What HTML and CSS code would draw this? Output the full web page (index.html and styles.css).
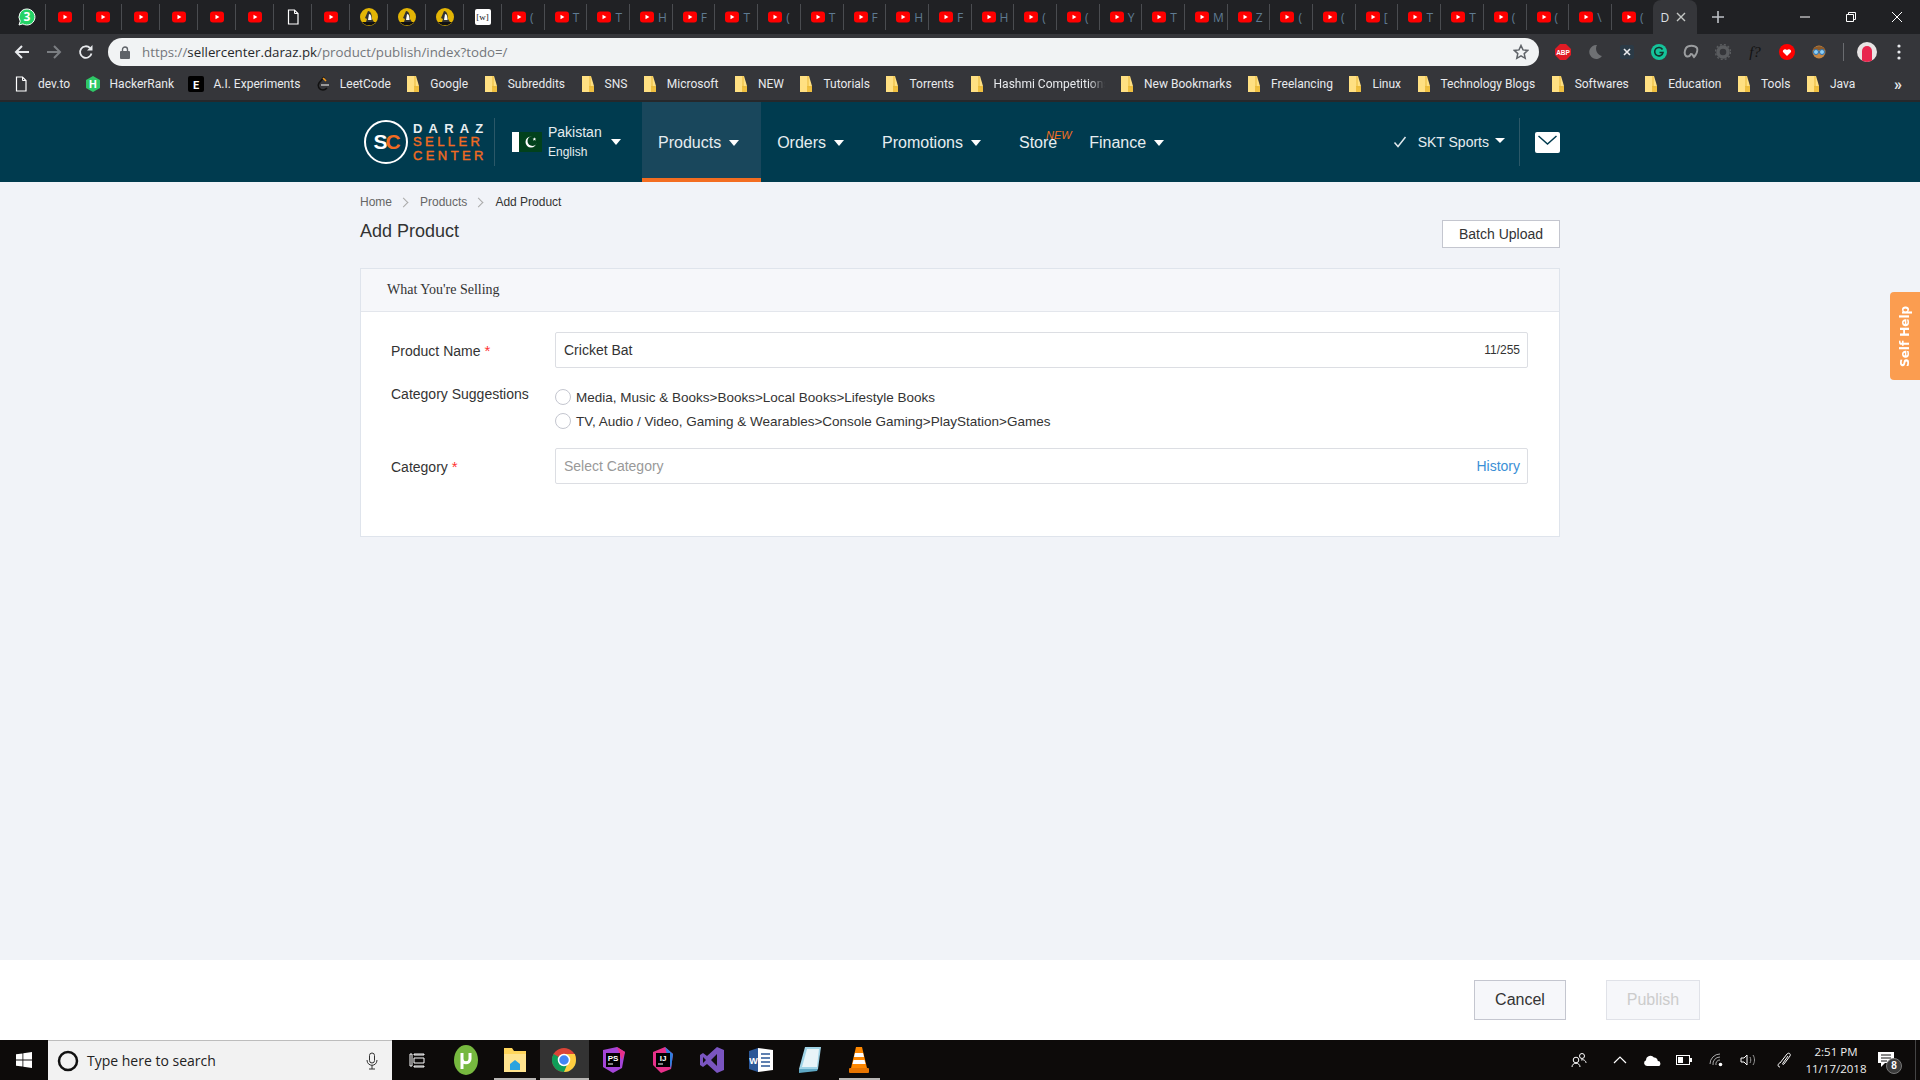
FILE: index.html
```html
<!DOCTYPE html>
<html lang="en">
<head>
  <meta charset="UTF-8">
  <title>Add Product - Daraz Seller Center</title>
  <link rel="stylesheet" href="styles.css">
</head>
<body>
  <svg class="sprites" width="0" height="0">
    <symbol id="yt" viewBox="0 0 14 14"><rect y="1.5" width="14" height="11" rx="3" fill="#f00"/><path d="M5.5 4.8v4.4L9.4 7z" fill="#fff"/></symbol>
    <symbol id="folder" viewBox="0 0 16 16"><path d="M2 0h9l3 10v6H2z" fill="#ffe082"/><path d="M14 10v6H9v-6z" fill="#f0c040"/><path d="M10 0v11h4" fill="none" stroke="#e9b93a"/></symbol>
    <symbol id="doc" viewBox="0 0 16 16"><path d="M3.5 1h6l3.5 3.5v10.500h-9.500z" fill="none" stroke="#fff" stroke-width="1.200"/><path d="M9.500 1v3.500h3.500" fill="none" stroke="#fff"/></symbol>
    <symbol id="tux" viewBox="0 0 18 18"><circle cx="9" cy="9" r="9" fill="#e3b505"/><path d="M2 14a9 9 0 0 0 14 0z" fill="#111"/><path d="M8 3c3 0 4 4 4 8l2 3H6l1-3-2-1z" fill="#333"/><path d="M9 6c2 0 2.500 3 2.500 6H8z" fill="#fff"/></symbol>
  </svg>

  <div class="tabs">
    <div class="tab pinned"><svg width="18" height="18" viewBox="0 0 18 18"><path d="M9 1a8 8 0 0 0-6.800 12.200L1 17l3.900-1.100A8 8 0 1 0 9 1z" fill="#25d366" stroke="#fff" stroke-width="1"/><text x="9" y="13" class="wa-num">3</text></svg></div>
    <div class="tab pinned"><svg width="14" height="14"><use href="#yt"/></svg></div>
    <div class="tab pinned"><svg width="14" height="14"><use href="#yt"/></svg></div>
    <div class="tab pinned"><svg width="14" height="14"><use href="#yt"/></svg></div>
    <div class="tab pinned"><svg width="14" height="14"><use href="#yt"/></svg></div>
    <div class="tab pinned"><svg width="14" height="14"><use href="#yt"/></svg></div>
    <div class="tab pinned"><svg width="14" height="14"><use href="#yt"/></svg></div>
    <div class="tab pinned"><svg width="16" height="16"><use href="#doc"/></svg></div>
    <div class="tab pinned"><svg width="14" height="14"><use href="#yt"/></svg></div>
    <div class="tab pinned"><svg width="18" height="18"><use href="#tux"/></svg></div>
    <div class="tab pinned"><svg width="18" height="18"><use href="#tux"/></svg></div>
    <div class="tab pinned"><svg width="18" height="18"><use href="#tux"/></svg></div>
    <div class="tab pinned"><span class="wiki">[w]</span></div>
    <div class="tab"><svg width="14" height="14"><use href="#yt"/></svg><span>(</span></div>
    <div class="tab"><svg width="14" height="14"><use href="#yt"/></svg><span>T</span></div>
    <div class="tab"><svg width="14" height="14"><use href="#yt"/></svg><span>T</span></div>
    <div class="tab"><svg width="14" height="14"><use href="#yt"/></svg><span>H</span></div>
    <div class="tab"><svg width="14" height="14"><use href="#yt"/></svg><span>F</span></div>
    <div class="tab"><svg width="14" height="14"><use href="#yt"/></svg><span>T</span></div>
    <div class="tab"><svg width="14" height="14"><use href="#yt"/></svg><span>(</span></div>
    <div class="tab"><svg width="14" height="14"><use href="#yt"/></svg><span>T</span></div>
    <div class="tab"><svg width="14" height="14"><use href="#yt"/></svg><span>F</span></div>
    <div class="tab"><svg width="14" height="14"><use href="#yt"/></svg><span>H</span></div>
    <div class="tab"><svg width="14" height="14"><use href="#yt"/></svg><span>F</span></div>
    <div class="tab"><svg width="14" height="14"><use href="#yt"/></svg><span>H</span></div>
    <div class="tab"><svg width="14" height="14"><use href="#yt"/></svg><span>(</span></div>
    <div class="tab"><svg width="14" height="14"><use href="#yt"/></svg><span>(</span></div>
    <div class="tab"><svg width="14" height="14"><use href="#yt"/></svg><span>Y</span></div>
    <div class="tab"><svg width="14" height="14"><use href="#yt"/></svg><span>T</span></div>
    <div class="tab"><svg width="14" height="14"><use href="#yt"/></svg><span>M</span></div>
    <div class="tab"><svg width="14" height="14"><use href="#yt"/></svg><span>Z</span></div>
    <div class="tab"><svg width="14" height="14"><use href="#yt"/></svg><span>(</span></div>
    <div class="tab"><svg width="14" height="14"><use href="#yt"/></svg><span>(</span></div>
    <div class="tab"><svg width="14" height="14"><use href="#yt"/></svg><span>[</span></div>
    <div class="tab"><svg width="14" height="14"><use href="#yt"/></svg><span>T</span></div>
    <div class="tab"><svg width="14" height="14"><use href="#yt"/></svg><span>T</span></div>
    <div class="tab"><svg width="14" height="14"><use href="#yt"/></svg><span>(</span></div>
    <div class="tab"><svg width="14" height="14"><use href="#yt"/></svg><span>(</span></div>
    <div class="tab"><svg width="14" height="14"><use href="#yt"/></svg><span>\</span></div>
    <div class="tab last"><svg width="14" height="14"><use href="#yt"/></svg><span>(</span></div>
    <div class="tab-active"><span>D</span><svg width="10" height="10" viewBox="0 0 10 10"><path d="M1 1l8 8M9 1l-8 8" stroke="#c4c7c5" stroke-width="1.400"/></svg></div>
    <svg class="new-tab" width="14" height="14" viewBox="0 0 14 14"><path d="M7 1v12M1 7h12" stroke="#bdc1c6" stroke-width="1.600"/></svg>
    <div class="win-btns">
      <svg width="12" height="12" viewBox="0 0 12 12"><path d="M1 6h10" stroke="#fff"/></svg>
      <svg width="12" height="12" viewBox="0 0 12 12"><path d="M1.500 3.500h7v7h-7zM3.500 3.500v-2h7v7h-2" fill="none" stroke="#fff"/></svg>
      <svg width="12" height="12" viewBox="0 0 12 12"><path d="M1 1l10 10M11 1L1 11" stroke="#fff"/></svg>
    </div>
  </div>

  <div class="toolbar">
    <div class="tool-btn"><svg width="16" height="16" viewBox="0 0 16 16"><path d="M15 8H2M8 2L2 8l6 6" fill="none" stroke="#e8eaed" stroke-width="2"/></svg></div>
    <div class="tool-btn"><svg width="16" height="16" viewBox="0 0 16 16"><path d="M1 8h13M8 2l6 6-6 6" fill="none" stroke="#7b7e82" stroke-width="2"/></svg></div>
    <div class="tool-btn"><svg width="16" height="16" viewBox="0 0 16 16"><path d="M13.500 9.500A5.800 5.800 0 1 1 12 4" fill="none" stroke="#e8eaed" stroke-width="1.800"/><path d="M14.500 1v5.500H9z" fill="#e8eaed"/></svg></div>
    <div class="url-bar">
      <svg class="lock" width="10" height="13" viewBox="0 0 10 13"><rect y="5" width="10" height="8" rx="1" fill="#5f6368"/><path d="M2.500 5V3.500a2.500 2.500 0 0 1 5 0V5" fill="none" stroke="#5f6368" stroke-width="1.400"/></svg>
      <span class="url"><span class="dim">https://</span>sellercenter.daraz.pk<span class="dim">/product/publish/index?todo=/</span></span>
      <svg class="star" width="16" height="16" viewBox="0 0 16 16"><path d="M8 1.500l2 4.400 4.700.5-3.500 3.200 1 4.700L8 11.900l-4.200 2.400 1-4.700L1.300 6.400 6 5.900z" fill="none" stroke="#5f6368" stroke-width="1.500"/></svg>
    </div>
    <div class="exts">
      <div class="ext"><svg width="16" height="16" viewBox="0 0 16 16"><path d="M5 0h6l5 5v6l-5 5H5l-5-5V5z" fill="#e01b24"/><text x="8" y="10.500" class="abp">ABP</text></svg></div>
      <div class="ext"><svg width="16" height="16" viewBox="0 0 16 16"><path d="M10 1a7 7 0 1 0 5 11A7.500 7.500 0 0 1 10 1z" fill="#6e7073"/></svg></div>
      <div class="ext"><svg width="14" height="14" viewBox="0 0 14 14"><rect width="14" height="14" rx="2" fill="#2b3a46"/><path d="M4 4l6 6M10 4l-6 6" stroke="#e8eaed" stroke-width="1.600"/></svg></div>
      <div class="ext"><svg width="16" height="16" viewBox="0 0 16 16"><circle cx="8" cy="8" r="8" fill="#15c39a"/><path d="M11.500 5.500A4.200 4.200 0 1 0 12 8.500H8.500" fill="none" stroke="#14332c" stroke-width="1.600"/></svg></div>
      <div class="ext"><svg width="16" height="16" viewBox="0 0 16 16"><path d="M3 4c2-3 9-3 11 0 1 3-1 7-3 9-1-1-1-3-3-3-1 2-3 3-5 2-2-2-1-6 0-8z" fill="none" stroke="#9b9d9f" stroke-width="2"/></svg></div>
      <div class="ext"><svg width="16" height="16" viewBox="0 0 16 16"><circle cx="8" cy="8" r="5" fill="none" stroke="#5a5c5f" stroke-width="3.500"/><circle cx="8" cy="8" r="7.500" fill="none" stroke="#5a5c5f" stroke-width="1.500" stroke-dasharray="2 2"/></svg></div>
      <div class="ext fq">f?</div>
      <div class="ext"><svg width="16" height="16" viewBox="0 0 16 16"><circle cx="8" cy="8" r="8" fill="#f00"/><path d="M8 12L4 8c-1-2 2-4 4-2 2-2 5 0 4 2z" fill="#fff"/></svg></div>
      <div class="ext"><svg width="16" height="16" viewBox="0 0 16 16"><circle cx="8" cy="8" r="6.500" fill="#c68642"/><path d="M2 6c1-5 11-5 12 0z" fill="#8a5a2b"/><circle cx="5" cy="8" r="2.500" fill="#8fd0f5" stroke="#2a6fb0"/><circle cx="11" cy="8" r="2.500" fill="#8fd0f5" stroke="#2a6fb0"/></svg></div>
    </div>
    <div class="tool-sep"></div>
    <div class="profile"><span></span></div>
    <svg class="dots" width="4" height="16" viewBox="0 0 4 16"><circle cx="2" cy="2" r="1.600" fill="#e8eaed"/><circle cx="2" cy="8" r="1.600" fill="#e8eaed"/><circle cx="2" cy="14" r="1.600" fill="#e8eaed"/></svg>
  </div>

  <div class="bookmarks">
    <div class="bm"><svg width="16" height="16"><use href="#doc"/></svg>dev.to</div>
    <div class="bm"><svg width="16" height="16" viewBox="0 0 16 16"><path d="M8 0l7 4v8l-7 4-7-4V4z" fill="#2ec866"/><text x="8" y="12" class="bm-letter">H</text></svg>HackerRank</div>
    <div class="bm"><svg width="16" height="16" viewBox="0 0 16 16"><rect width="16" height="16" rx="2" fill="#000"/><text x="8" y="12.500" class="bm-letter">E</text></svg>A.I. Experiments</div>
    <div class="bm"><svg width="16" height="16" viewBox="0 0 16 16"><path d="M9 1L4 7c-2 3 0 7 4 7 2 0 3-1 4-2" fill="none" stroke="#111" stroke-width="1.600"/><path d="M11 5L8 2" stroke="#f89f1b" stroke-width="1.600"/><path d="M6 9h8" stroke="#b3b3b3" stroke-width="1.600"/></svg>LeetCode</div>
    <div class="bm"><svg width="16" height="16"><use href="#folder"/></svg>Google</div>
    <div class="bm"><svg width="16" height="16"><use href="#folder"/></svg>Subreddits</div>
    <div class="bm"><svg width="16" height="16"><use href="#folder"/></svg>SNS</div>
    <div class="bm"><svg width="16" height="16"><use href="#folder"/></svg>Microsoft</div>
    <div class="bm"><svg width="16" height="16"><use href="#folder"/></svg>NEW</div>
    <div class="bm"><svg width="16" height="16"><use href="#folder"/></svg>Tutorials</div>
    <div class="bm"><svg width="16" height="16"><use href="#folder"/></svg>Torrents</div>
    <div class="bm"><svg width="16" height="16"><use href="#folder"/></svg><span class="bm-cut">Hashmi Competitions</span></div>
    <div class="bm"><svg width="16" height="16"><use href="#folder"/></svg>New Bookmarks</div>
    <div class="bm"><svg width="16" height="16"><use href="#folder"/></svg>Freelancing</div>
    <div class="bm"><svg width="16" height="16"><use href="#folder"/></svg>Linux</div>
    <div class="bm"><svg width="16" height="16"><use href="#folder"/></svg>Technology Blogs</div>
    <div class="bm"><svg width="16" height="16"><use href="#folder"/></svg>Softwares</div>
    <div class="bm"><svg width="16" height="16"><use href="#folder"/></svg>Education</div>
    <div class="bm"><svg width="16" height="16"><use href="#folder"/></svg>Tools</div>
    <div class="bm"><svg width="16" height="16"><use href="#folder"/></svg>Java</div>
    <div class="bm-more">&raquo;</div>
  </div>

  <nav class="nav">
    <div class="nav-inner">
      <div class="logo">
        <div class="logo-mark"><span>S</span><span class="orange">C</span></div>
        <div class="logo-text">
          <div class="l-daraz">DARAZ</div>
          <div class="l-seller">SELLER</div>
          <div class="l-seller">CENTER</div>
        </div>
      </div>
      <div class="country">
        <svg width="30" height="20" viewBox="0 0 30 20"><rect width="30" height="20" fill="#01411c"/><rect width="7" height="20" fill="#fff"/><circle cx="19" cy="10" r="5.500" fill="#fff"/><circle cx="20.500" cy="9" r="5" fill="#01411c"/><path d="M22 4.500l.6 1.700 1.700.1-1.300 1 .5 1.700-1.500-1-1.500 1 .5-1.700-1.300-1 1.700-.1z" fill="#fff" transform="scale(.8) translate(6 2)"/></svg>
        <div class="country-text">
          <div>Pakistan</div>
          <div class="lang">English</div>
        </div>
        <i class="caret"></i>
      </div>
      <a class="nav-item active">Products<i class="caret"></i></a>
      <a class="nav-item">Orders<i class="caret"></i></a>
      <a class="nav-item">Promotions<i class="caret"></i></a>
      <a class="nav-item store">Store<span class="new-badge">NEW</span></a>
      <a class="nav-item finance">Finance<i class="caret"></i></a>
      <div class="seller">
        <svg width="14" height="12" viewBox="0 0 14 12"><path d="M1.500 6.500l3.500 4L12.500 1" fill="none" stroke="#dfe8ec" stroke-width="1.500"/></svg>
        <span>SKT Sports</span>
        <i class="caret small"></i>
      </div>
      <div class="mail">
        <svg width="25" height="21" viewBox="0 0 25 21"><rect width="25" height="21" rx="2" fill="#fff"/><path d="M3.500 4l9 8 9-8" fill="none" stroke="#003b4f" stroke-width="1.500"/></svg>
      </div>
    </div>
  </nav>

  <main class="main">
    <div class="crumbs">
      <span>Home</span><i class="chev"></i><span>Products</span><i class="chev"></i><span class="here">Add Product</span>
    </div>
    <div class="title-row">
      <h1>Add Product</h1>
      <button class="btn-batch">Batch Upload</button>
    </div>
    <section class="card">
      <div class="card-head">What You're Selling</div>
      <div class="card-body">
        <div class="row">
          <label>Product Name <b>*</b></label>
          <div class="input">
            <span>Cricket Bat</span>
            <span class="count">11/255</span>
          </div>
        </div>
        <div class="row suggest">
          <label>Category Suggestions</label>
          <div class="radios">
            <div class="radio"><i></i>Media, Music &amp; Books&gt;Books&gt;Local Books&gt;Lifestyle Books</div>
            <div class="radio"><i></i>TV, Audio / Video, Gaming &amp; Wearables&gt;Console Gaming&gt;PlayStation&gt;Games</div>
          </div>
        </div>
        <div class="row">
          <label>Category <b>*</b></label>
          <div class="input">
            <span class="placeholder">Select Category</span>
            <a class="history">History</a>
          </div>
        </div>
      </div>
    </section>
  </main>

  <div class="self-help">Self Help</div>

  <footer class="actions">
    <button class="btn-cancel">Cancel</button>
    <button class="btn-publish">Publish</button>
  </footer>

  <div class="taskbar">
    <div class="start"><svg width="16" height="16" viewBox="0 0 16 16"><path d="M0 2.300l6.500-.9v6.200H0zM7.300 1.300L16 0v7.600H7.300zM0 8.400h6.500v6.200L0 13.700zM7.300 8.400H16V16l-8.700-1.300z" fill="#fff"/></svg></div>
    <div class="search">
      <svg width="22" height="22" viewBox="0 0 22 22"><circle cx="11" cy="11" r="9" fill="none" stroke="#111" stroke-width="2.500"/></svg>
      <span>Type here to search</span>
      <svg class="mic" width="12" height="18" viewBox="0 0 12 18"><rect x="3.500" y="1" width="5" height="10" rx="2.500" fill="none" stroke="#333"/><path d="M1 8c0 7 10 7 10 0M6 13v4M3 17h6" fill="none" stroke="#333"/></svg>
    </div>
    <div class="task-apps">
      <div class="app"><svg width="16" height="16" viewBox="0 0 16 16"><path d="M1 2h2v12H1zM5 2h10v1H5zM5 6h10v5H5zM5 14h10v1H5z" fill="none" stroke="#fff"/></svg></div>
      <div class="app"><svg width="24" height="30" viewBox="0 0 24 30"><ellipse cx="12" cy="15" rx="12" ry="15" fill="#76b83f"/><path d="M8 8v16M8 8v6c0 5 8 5 8 0V8" fill="none" stroke="#fff" stroke-width="3"/></svg></div>
      <div class="app open"><svg width="22" height="24" viewBox="0 0 22 24"><path d="M0 0h8l2 3h12v21H0z" fill="#ffd65c"/><rect y="6" width="22" height="18" fill="#ffe48f"/><path d="M6 22v-6l5-4 5 4v6z" fill="#2aa3e0"/></svg></div>
      <div class="app open current"><svg width="24" height="24" viewBox="0 0 24 24"><circle cx="12" cy="12" r="12" fill="#db4437"/><path d="M12 24a12 12 0 0 1-10.400-18L12 12h12a12 12 0 0 1-12 12z" fill="#0f9d58"/><path d="M24 12A12 12 0 0 1 12 24l5-12-5-6h10.900c.7 1.800 1.100 3.900 1.100 6z" fill="#ffcd40"/><circle cx="12" cy="12" r="5.500" fill="#4285f4" stroke="#fff" stroke-width="1.500"/></svg></div>
      <div class="app"><svg width="24" height="26" viewBox="0 0 24 26"><path d="M2 3l14-3 8 5-3 16-9 5-10-6z" fill="#a445d8"/><path d="M16 0l8 5-3 8z" fill="#e8308a"/><rect x="5" y="6" width="14" height="14" fill="#000"/><text x="12" y="14" class="ide">PS</text><path d="M7 17h5" stroke="#fff"/></svg></div>
      <div class="app"><svg width="24" height="26" viewBox="0 0 24 26"><path d="M2 5l12-5 8 7-2 15-10 4-8-8z" fill="#e8308a"/><path d="M14 0l8 7-2 15z" fill="#2f7fe0"/><rect x="5" y="6" width="14" height="14" fill="#000"/><text x="12" y="14" class="ide">IJ</text><path d="M7 17h5" stroke="#fff"/></svg></div>
      <div class="app"><svg width="24" height="26" viewBox="0 0 24 26"><path d="M17 0l7 3v20l-7 3-10-9-4 3-3-2V8l3-2 4 3z" fill="#7a55c0"/><path d="M17 7l-6 6 6 6zM3 10v6l3-3z" fill="#101010"/></svg></div>
      <div class="app"><svg width="24" height="24" viewBox="0 0 24 24"><path d="M9 0l15 2v20L9 24z" fill="#fff"/><path d="M9 0v24L0 21V3z" fill="#2b5797"/><path d="M12 6h9M12 10h9M12 14h9M12 18h9" stroke="#2b5797" stroke-width="1.500"/><text x="4.500" y="16" class="word">W</text></svg></div>
      <div class="app"><svg width="22" height="26" viewBox="0 0 22 26"><path d="M6 0h16l-3 22H0z" fill="#9fd3e6"/><path d="M8 2h12l-2 18H3z" fill="#e8f4f8"/><path d="M0 22l19 0-1 2-18 2z" fill="#5fa8c4"/></svg></div>
      <div class="app open"><svg width="20" height="26" viewBox="0 0 20 26"><path d="M7 0h6l5 21H2z" fill="#ff8800"/><path d="M6 6h8l1 4H5zM4.500 13h11l1 4h-13z" fill="#fff"/><rect y="21" width="20" height="5" rx="1" fill="#e87500"/></svg></div>
    </div>
    <div class="tray">
      <div class="tray-ic people"><svg width="16" height="16" viewBox="0 0 16 16"><circle cx="5" cy="8" r="2.800" fill="none" stroke="#fff"/><path d="M1 15c0-5 8-5 8 0" fill="none" stroke="#fff"/><circle cx="11" cy="4" r="2.500" fill="none" stroke="#fff"/><path d="M10 8c3-1 5 1 5 3" fill="none" stroke="#fff"/></svg></div>
      <div class="tray-ic"><svg width="14" height="8" viewBox="0 0 14 8"><path d="M1 7l6-6 6 6" fill="none" stroke="#fff" stroke-width="1.200"/></svg></div>
      <div class="tray-ic"><svg width="18" height="12" viewBox="0 0 18 12"><path d="M4 12a3 3 0 0 1-1-5.800A4.500 4.500 0 0 1 11 3.500 3.500 3.500 0 0 1 14.800 7 2.500 2.500 0 0 1 15 12z" fill="#fff"/></svg></div>
      <div class="tray-ic"><svg width="16" height="10" viewBox="0 0 16 10"><rect x=".5" y=".5" width="13" height="9" fill="none" stroke="#fff"/><rect x="2" y="2" width="5" height="6" fill="#fff"/><rect x="14" y="3" width="2" height="4" fill="#fff"/></svg></div>
      <div class="tray-ic"><svg width="14" height="14" viewBox="0 0 14 14"><path d="M1 11A10 10 0 0 1 11 1M4 12A7 7 0 0 1 11 4M7 12a4 4 0 0 1 4-5" fill="none" stroke="#aaa"/><circle cx="11.500" cy="11.500" r="1.800" fill="#fff"/></svg></div>
      <div class="tray-ic"><svg width="16" height="14" viewBox="0 0 16 14"><path d="M1 5h3l3-3v10L4 9H1z" fill="none" stroke="#fff"/><path d="M10 4c1 2 1 4 0 6M13 2c2 3 2 7 0 10" fill="none" stroke="#999"/></svg></div>
      <div class="tray-ic pen"><svg width="16" height="18" viewBox="0 0 16 18"><path d="M3 16c-3 0-2-4 0-4l7-9c2-2 4 0 3 2l-6 8c-1 1-2 0-1-1l5-7" fill="none" stroke="#fff"/></svg></div>
      <div class="clock">
        <div>2:51 PM</div>
        <div>11/17/2018</div>
      </div>
      <div class="notif">
        <svg width="18" height="16" viewBox="0 0 18 16"><path d="M0 0h16v11H7l-4 4v-4H0z" fill="#fff"/><path d="M3 3h10M3 6h10M3 9h6" stroke="#111"/></svg>
        <span class="notif-badge">8</span>
      </div>
      <div class="show-desktop"></div>
    </div>
  </div>
</body>
</html>
```

FILE: styles.css
```css
* {
  box-sizing: border-box;
}

html, body {
  height: 100%;
}

body {
  margin: 0;
  height: 1080px;
  overflow: hidden;
  display: flex;
  flex-direction: column;
  font-family: "Liberation Sans", Arial, sans-serif;
  font-size: 14px;
  color: #333;
  background: #f1f3f8;
}

.sprites {
  position: absolute;
}

/* browser chrome */
.tabs {
  height: 34px;
  flex: none;
  display: flex;
  align-items: center;
  padding-left: 8px;
  background: #202124;
}

.tab {
  width: 42.7px;
  height: 26px;
  flex: none;
  display: flex;
  align-items: center;
  gap: 4px;
  padding-left: 10px;
  border-right: 1px solid #4a4c50;
  overflow: hidden;
  font-family: "Open Sans", sans-serif;
  font-size: 12px;
  color: #5f7b92;
}

.tab.pinned {
  width: 38px;
  padding-left: 0;
  justify-content: center;
}

.tab.last {
  border-right: 0;
}

.wa-num {
  font-size: 12px;
  font-weight: bold;
  text-anchor: middle;
  fill: #fff;
}

.wiki {
  width: 16px;
  height: 16px;
  border-radius: 2px;
  background: #fff;
  color: #111;
  font: 9px/16px "Liberation Serif", serif;
  text-align: center;
}

.tab-active {
  width: 44px;
  height: 34px;
  flex: none;
  margin-left: -2px;
  display: flex;
  align-items: center;
  gap: 7px;
  padding-left: 8px;
  border-radius: 8px 8px 0 0;
  background: #35363a;
  font-family: "Open Sans", sans-serif;
  font-size: 12px;
  color: #dee1e6;
}

.new-tab {
  margin-left: 14px;
  flex: none;
}

.win-btns {
  margin-left: auto;
  height: 26px;
  display: flex;
  align-items: center;
  gap: 34px;
  padding-right: 17px;
}

.toolbar {
  height: 36px;
  flex: none;
  display: flex;
  align-items: center;
  padding-left: 6px;
  background: #35363a;
}

.tool-btn {
  width: 32px;
  display: flex;
  justify-content: center;
}

.url-bar {
  width: 1431px;
  height: 28px;
  flex: none;
  margin-left: 6px;
  display: flex;
  align-items: center;
  padding: 0 10px 0 12px;
  border-radius: 14px;
  background: #f1f3f4;
}

.lock {
  flex: none;
}

.url {
  margin-left: 12px;
  font-family: "Open Sans", sans-serif;
  font-size: 13.3px;
  color: #26282b;
}

.dim {
  color: #74777b;
}

.star {
  margin-left: auto;
}

.exts {
  display: flex;
  margin-left: 8px;
}

.ext {
  width: 32px;
  height: 20px;
  display: flex;
  align-items: center;
  justify-content: center;
}

.abp {
  font-size: 6.500px;
  font-weight: bold;
  text-anchor: middle;
  fill: #fff;
}

.fq {
  font: italic 15px "Liberation Serif", serif;
  color: #111;
}

.tool-sep {
  width: 1px;
  height: 18px;
  margin-left: 8px;
  background: #6a6c70;
}

.profile {
  width: 20px;
  height: 20px;
  margin-left: 13px;
  display: flex;
  justify-content: center;
  align-items: flex-end;
  border-radius: 50%;
  background: #e8e4e4;
  overflow: hidden;
}

.profile span {
  width: 10px;
  height: 16px;
  border-radius: 5px 5px 0 0;
  background: #e8264e;
}

.dots {
  margin-left: 20px;
}

.bookmarks {
  height: 32px;
  flex: none;
  display: flex;
  align-items: center;
  padding: 0 0 2px 6px;
  background: #35363a;
  border-bottom: 2px solid #26282b;
  font-family: Roboto, sans-serif;
  font-size: 12px;
  color: #e8eaed;
  white-space: nowrap;
}

.bm {
  display: flex;
  align-items: center;
  gap: 9px;
  padding: 0 7.5px 0 7px;
}

.bm-letter {
  font-size: 11px;
  font-weight: bold;
  text-anchor: middle;
  fill: #fff;
}

.bm-cut {
  width: 111px;
  overflow: hidden;
  -webkit-mask-image: linear-gradient(to right, #000 85%, transparent);
  mask-image: linear-gradient(to right, #000 85%, transparent);
}

.bm-more {
  margin-left: auto;
  padding-right: 18px;
  font-size: 16px;
  font-weight: bold;
}

/* seller center header */
.nav {
  height: 80px;
  flex: none;
  background: #003b4f;
  color: #e6edf0;
}

.nav-inner {
  width: 1200px;
  height: 100%;
  margin: 0 auto;
  display: flex;
  align-items: center;
}

.logo {
  width: 135px;
  height: 48px;
  flex: none;
  display: flex;
  align-items: center;
  gap: 5px;
  margin-right: 17px;
  padding-left: 4px;
  border-right: 1px solid #2b5868;
}

.logo-mark {
  width: 44px;
  height: 44px;
  flex: none;
  display: flex;
  align-items: center;
  justify-content: center;
  border: 2px solid #fff;
  border-radius: 50%;
  color: #fff;
  font-size: 21px;
  font-weight: bold;
  letter-spacing: -2px;
}

.orange {
  color: #f26b21;
}

.logo-text {
  font-weight: bold;
  line-height: 13.5px;
  white-space: nowrap;
}

.l-daraz {
  font-size: 13px;
  letter-spacing: 6.200px;
  color: #e8eef1;
}

.l-seller {
  font-size: 13px;
  letter-spacing: 3.400px;
  font-weight: normal;
  color: #f26b21;
  -webkit-text-stroke: .4px #f26b21;
}

.country {
  width: 130px;
  height: 100%;
  flex: none;
  display: flex;
  align-items: center;
}

.country-text {
  margin-left: 6px;
  line-height: 20px;
}

.lang {
  font-size: 12px;
}

.caret {
  display: inline-block;
  width: 0;
  height: 0;
  border: 5.500px solid transparent;
  border-top: 6px solid #fff;
  border-bottom: 0;
  margin-left: 9px;
}

.caret.small {
  border-width: 5px 5px 0;
  border-top-color: #fff;
  margin: -3px 0 0 6px;
}

.nav-item {
  height: 100%;
  flex: none;
  display: flex;
  align-items: center;
  padding: 2px 22px 0 16px;
  font-size: 16px;
}

.nav-item .caret {
  margin-left: 8px;
}

.nav-item.active {
  background: #19475c;
  border-bottom: 4px solid #f36d21;
  padding-top: 6px;
}

.nav-item.store {
  position: relative;
  padding-right: 0;
}

.new-badge {
  position: absolute;
  left: 43px;
  top: 27px;
  font-size: 11px;
  font-style: italic;
  color: #f5701f;
}

.nav-item.finance {
  padding-left: 32px;
}

.seller {
  margin-left: auto;
  height: 48px;
  display: flex;
  align-items: center;
  gap: 11px;
  padding-right: 14px;
  border-right: 1px solid #2b5868;
  white-space: nowrap;
}

.seller .caret {
  margin-left: -5px;
}

.mail {
  display: flex;
  padding-left: 15px;
}

/* page */
.main {
  flex: 1;
  padding: 12px 360px 0;
  min-height: 0;
}

.crumbs {
  height: 16px;
  display: flex;
  align-items: center;
  font-size: 12px;
  line-height: 16px;
  color: #666;
}

.here {
  color: #333;
}

.chev {
  width: 7px;
  height: 7px;
  margin: 0 13px 0 8px;
  border-top: 1px solid #aaa;
  border-right: 1px solid #aaa;
  transform: rotate(45deg);
}

.title-row {
  display: flex;
  justify-content: space-between;
  align-items: flex-start;
  margin: 10px 0 20px;
  height: 28px;
}

h1 {
  margin: 0;
  font-size: 18px;
  font-weight: normal;
  line-height: 22px;
}

.btn-batch {
  width: 118px;
  height: 28px;
  padding: 0;
  border: 1px solid #c4c6cf;
  background: #fff;
  font: 14px "Liberation Sans", Arial, sans-serif;
  color: #333;
}

.card {
  height: 269px;
  border: 1px solid #dfe4ec;
  background: #fff;
}

.card-head {
  height: 43px;
  padding-left: 26px;
  border-bottom: 1px solid #e3e6ec;
  background: #f6f7fa;
  font: 14px/41px "Liberation Serif", serif;
}

.card-body {
  padding: 20px 31px 0 30px;
}

.row {
  display: flex;
  align-items: center;
  margin-bottom: 15px;
}

.row label {
  width: 164px;
  flex: none;
  padding-top: 1px;
}

.row b {
  font-weight: normal;
  font-size: 15px;
  color: #f33;
}

.row.suggest {
  align-items: flex-start;
  margin: 17px 0 15px;
}

.row.suggest label {
  padding-top: 0;
  line-height: 18px;
}

.input {
  flex: 1;
  height: 36px;
  display: flex;
  align-items: center;
  justify-content: space-between;
  padding: 0 7px 0 8px;
  border: 1px solid #dcdee3;
  border-radius: 2px;
}

.count {
  font-size: 12px;
}

.placeholder {
  color: #999;
}

.history {
  color: #3b8fd6;
}

.radios {
  flex: 1;
  font-size: 13.5px;
}

.radio {
  height: 24px;
  display: flex;
  align-items: center;
  gap: 5px;
}

.radio i {
  width: 16px;
  height: 16px;
  border: 1px solid #c4c6cf;
  border-radius: 50%;
  background: #fff;
}

.self-help {
  position: absolute;
  right: 0;
  top: 292px;
  width: 30px;
  height: 88px;
  display: flex;
  align-items: center;
  justify-content: center;
  border-radius: 0 4px 4px 0;
  background: #fb9d50;
  color: #fff;
  font: bold 12px "DejaVu Sans", sans-serif;
  writing-mode: vertical-rl;
  transform: rotate(180deg);
}

.actions {
  height: 80px;
  flex: none;
  display: flex;
  align-items: center;
  padding-left: 1474px;
  background: #fff;
}

.actions button {
  height: 40px;
  padding: 0;
  font: 16px "Liberation Sans", Arial, sans-serif;
}

.btn-cancel {
  width: 92px;
  margin-right: 40px;
  border: 1px solid #c4c6cf;
  background: #f6f7fa;
  color: #333;
}

.btn-publish {
  width: 94px;
  border: 1px solid #e0e2e8;
  background: #f6f7fa;
  color: #ccc;
}

/* windows taskbar */
.taskbar {
  height: 40px;
  flex: none;
  display: flex;
  background: #0d0b0a;
}

.start {
  width: 48px;
  display: flex;
  align-items: center;
  justify-content: center;
}

.search {
  width: 344px;
  display: flex;
  align-items: center;
  padding: 0 14px 0 9px;
  border-top: 1px solid #bdbdbd;
  background: #f2f2f2;
}

.search span {
  margin-left: 8px;
  font-family: "Open Sans", sans-serif;
  font-size: 14px;
  color: #222;
}

.mic {
  margin-left: auto;
}

.task-apps {
  display: flex;
}

.app {
  position: relative;
  width: 49.200px;
  display: flex;
  align-items: center;
  justify-content: center;
}

.app.open::after {
  content: "";
  position: absolute;
  left: 4px;
  right: 4px;
  bottom: 0;
  height: 2px;
  background: #b8b6b4;
}

.app.current {
  background: #333;
}

.app.current::after {
  left: 0;
  right: 0;
}

.ide {
  font-size: 8px;
  font-weight: bold;
  text-anchor: middle;
  fill: #fff;
}

.word {
  font-size: 9px;
  font-weight: bold;
  text-anchor: middle;
  fill: #fff;
}

.tray {
  margin-left: auto;
  display: flex;
  align-items: center;
}

.tray-ic {
  width: 32px;
  display: flex;
  justify-content: center;
}

.tray-ic.people {
  margin-right: 9px;
}

.tray-ic.pen {
  margin-left: 5px;
}

.clock {
  width: 70px;
  text-align: center;
  font-family: "Open Sans", sans-serif;
  font-size: 11.5px;
  line-height: 17px;
  color: #eee;
}

.notif {
  position: relative;
  width: 30px;
  margin-left: 1px;
  display: flex;
  justify-content: center;
}

.notif-badge {
  position: absolute;
  right: 0;
  top: 6px;
  width: 16px;
  height: 16px;
  border-radius: 50%;
  background: #3a3a3a;
  border: 1px solid #777;
  color: #fff;
  font-size: 10px;
  font-weight: bold;
  line-height: 14px;
  text-align: center;
}

.show-desktop {
  width: 1px;
  height: 40px;
  margin: 0 4px 0 13px;
  background: #444;
}
```
